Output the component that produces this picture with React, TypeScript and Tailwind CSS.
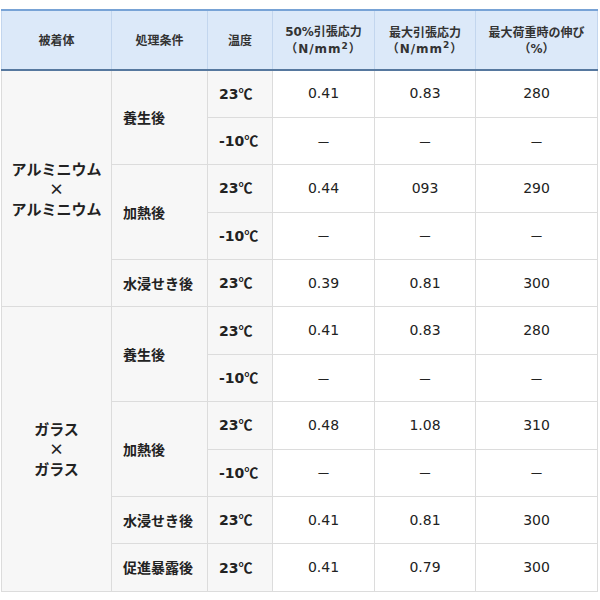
const jp = "font-['Meiryo','Noto_Sans_CJK_JP',sans-serif]";
const num = "font-['Verdana','DejaVu_Sans','Noto_Sans_CJK_JP',sans-serif]";

type Row = {
  sub?: { label: string; span: number };
  cond?: { label: string; span: number };
  temp: string;
  vals: [string, string, string];
};

const rows: Row[] = [
  { sub: { label: "アルミニウム\n×\nアルミニウム", span: 5 }, cond: { label: "養生後", span: 2 }, temp: "23", vals: ["0.41", "0.83", "280"] },
  { temp: "-10", vals: ["－", "－", "－"] },
  { cond: { label: "加熱後", span: 2 }, temp: "23", vals: ["0.44", "093", "290"] },
  { temp: "-10", vals: ["－", "－", "－"] },
  { cond: { label: "水浸せき後", span: 1 }, temp: "23", vals: ["0.39", "0.81", "300"] },
  { sub: { label: "ガラス\n×\nガラス", span: 6 }, cond: { label: "養生後", span: 2 }, temp: "23", vals: ["0.41", "0.83", "280"] },
  { temp: "-10", vals: ["－", "－", "－"] },
  { cond: { label: "加熱後", span: 2 }, temp: "23", vals: ["0.48", "1.08", "310"] },
  { temp: "-10", vals: ["－", "－", "－"] },
  { cond: { label: "水浸せき後", span: 1 }, temp: "23", vals: ["0.41", "0.81", "300"] },
  { cond: { label: "促進暴露後", span: 1 }, temp: "23", vals: ["0.41", "0.79", "300"] },
];

export default function App() {
  const th = `border-x border-[#c3d6ee] font-bold text-[12px] leading-[16px] text-[#333] ${jp}`;
  return (
    <div className="w-[600px] h-[600px] bg-white pt-[9px] pl-[1px]">
      <table className="w-[596px] border-collapse table-fixed">
        <colgroup>
          <col className="w-[110px]" />
          <col className="w-[96px]" />
          <col className="w-[65px]" />
          <col className="w-[102px]" />
          <col className="w-[101px]" />
          <col className="w-[122px]" />
        </colgroup>
        <thead>
          <tr className="h-[60px] bg-[#dce9f9] border-t-2 border-t-[#78a3d6] border-b-2 border-b-[#56789f]">
            <th className={th}>被着体</th>
            <th className={th}>処理条件</th>
            <th className={th}>温度</th>
            <th className={th}>
              <span className={num}>50%</span>引張応力
              <br />
              <span className={`${num} tracking-[1px]`}>
                （N/mm<sup className="text-[9px]">2</sup>）
              </span>
            </th>
            <th className={th}>
              最大引張応力
              <br />
              <span className={`${num} tracking-[1px]`}>
                （N/mm<sup className="text-[9px]">2</sup>）
              </span>
            </th>
            <th className={th}>
              最大荷重時の伸び
              <br />（<span className={num}>%</span>）
            </th>
          </tr>
        </thead>
        <tbody>
          {rows.map((r, i) => (
            <tr key={i} className="h-[47.4px]">
              {r.sub && (
                <td
                  rowSpan={r.sub.span}
                  className={`border border-[#dcdcdc] bg-[#f7f7f7] text-center font-bold text-[15px] leading-[20px] text-[#222] whitespace-pre-line ${jp}`}
                >
                  {r.sub.label}
                </td>
              )}
              {r.cond && (
                <td
                  rowSpan={r.cond.span}
                  className={`border border-[#dcdcdc] bg-[#f7f7f7] pl-[11px] font-bold text-[14px] text-[#222] ${jp}`}
                >
                  {r.cond.label}
                </td>
              )}
              <td className={`border border-[#dcdcdc] bg-[#f7f7f7] pl-[11px] font-bold text-[14px] text-[#222] ${num}`}>
                {r.temp}
                <span className={jp}>℃</span>
              </td>
              {r.vals.map((v, j) => (
                <td
                  key={j}
                  className={`border border-[#dcdcdc] text-center text-[14px] text-[#222] ${v === "－" ? jp : num}`}
                >
                  {v}
                </td>
              ))}
            </tr>
          ))}
        </tbody>
      </table>
    </div>
  );
}
